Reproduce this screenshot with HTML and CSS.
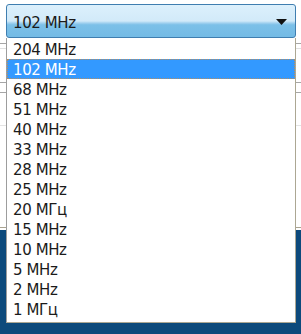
FILE: index.html
```html
<!DOCTYPE html>
<html>
    <head>
        <title>Bandwidth</title>
        <link rel="stylesheet" href="styles.css">
    </head>
    <body>
        <div class="page">
            <div class="band band1"></div>
            <div class="band band2"></div>
            <div class="band band3"></div>
            <div class="band band4"></div>
            <div class="band band5"></div>
            <div class="band band6"></div>
            <div class="band band7"></div>
            <div class="footer"></div>
        </div>

        <div class="dropdown">
            <div class="combo">
                <span class="comboValue">102 MHz</span>
                <svg class="arrow" width="11" height="6" viewBox="0 0 11 6"><polygon points="0,0 11,0 5.5,6" fill="#111"/></svg>
            </div>
            <ul class="options">
                <li>204 MHz</li>
                <li class="selected">102 MHz</li>
                <li>68 MHz</li>
                <li>51 MHz</li>
                <li>40 MHz</li>
                <li>33 MHz</li>
                <li>28 MHz</li>
                <li>25 MHz</li>
                <li>20 МГц</li>
                <li>15 MHz</li>
                <li>10 MHz</li>
                <li>5 MHz</li>
                <li>2 MHz</li>
                <li>1 МГц</li>
            </ul>
        </div>
    </body>
</html>
```

FILE: styles.css
```css
html, body{
    margin: 0;
    height: 100%;
}
body{
    background: #ffffff;
    font-family: "DejaVu Sans", Verdana, sans-serif;
    font-size: 15px;
    letter-spacing: -0.4px;
    color: #1b1b1b;
}

/* page behind the open list */
.page{
    display: flex;
    flex-direction: column;
    height: 334px;
}
.band{
    flex: none;
}
.band1{ height: 43px; border-bottom: 1px solid #a6a6a6; }
.band2{ height: 4px; border-bottom: 1px solid #e0e0e0; }
.band3{ height: 33px; border-bottom: 1px solid #a6a6a6; }
.band4{ height: 9px; border-bottom: 1px solid #a6a6a6; }
.band5{ height: 32px; border-bottom: 1px solid #e4e4e4; }
.band6{ height: 101px; border-bottom: 1px solid #aaa491; }
.band7{ height: 2px; }
.footer{
    flex: 1;
    background: #0d4a7c;
}

/* combo box + open list */
.dropdown{
    position: absolute;
    left: 6px;
    top: 4px;
    width: 290px;
}
.combo{
    border: 1px solid #3f7eb0;
    border-radius: 3px;
    background: linear-gradient(#dcf0fc 0%, #d2eaf9 50%, #a4d2ef 56%, #7cc0e8 62%, #74bbe5 100%);
    display: flex;
    align-items: center;
    justify-content: space-between;
    padding: 4px 8px 0 6px;
    box-sizing: border-box;
    height: 34px;
}
.arrow{
    margin-bottom: 2px;
}
.options{
    list-style: none;
    margin: 0;
    padding: 1px 0 3px 0;
    background: #ffffff;
    border-left: 1px solid #9d9d9d;
    border-right: 1px solid #aca793;
    border-bottom: 1px solid #aca793;
}
.options li{
    height: 18px;
    line-height: 18px;
    padding: 2px 0 0 6px;
}
.options li.selected{
    background: #3399ff;
    color: #ffffff;
    border: 1px dotted #b48d62;
    height: 17px;
    line-height: 18px;
    padding: 1px 0 0 5px;
}
```
